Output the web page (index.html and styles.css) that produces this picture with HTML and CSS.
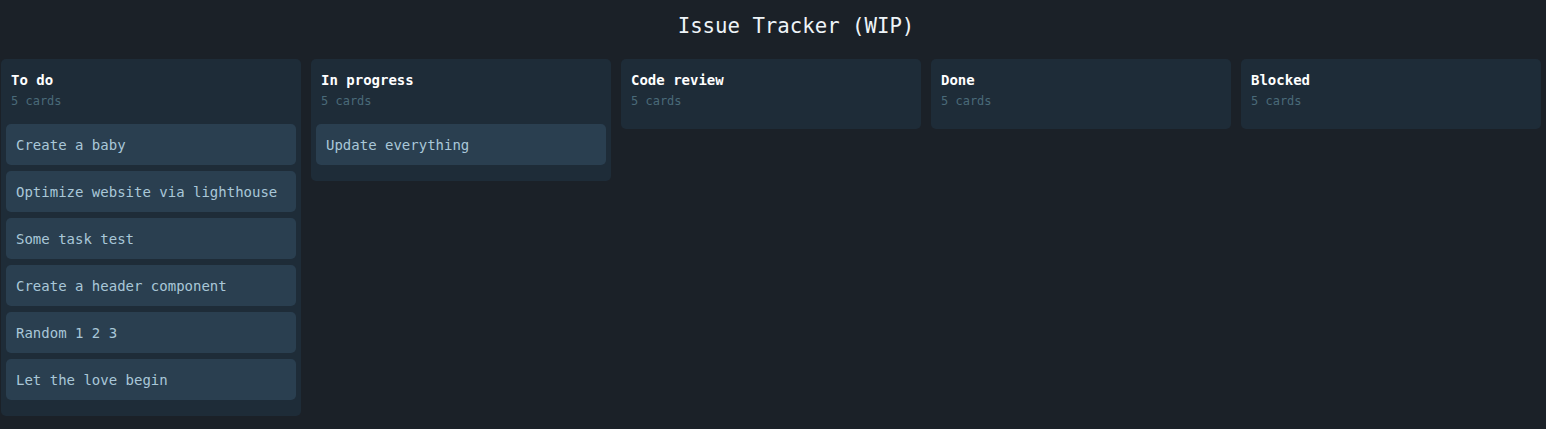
FILE: index.html
```html
<!DOCTYPE html>
<html lang="en">
<head>
<meta charset="utf-8">
<title>Issue Tracker (WIP)</title>
<link rel="stylesheet" href="styles.css">
</head>
<body>
<header class="page-header">
  <h1 class="page-title">Issue Tracker (WIP)</h1>
</header>
<main class="board">
  <section class="column">
    <div class="column-head">
      <h2 class="column-title">To do</h2>
      <div class="column-count">5 cards</div>
    </div>
    <div class="cards">
      <div class="card">Create a baby</div>
      <div class="card">Optimize website via lighthouse</div>
      <div class="card">Some task test</div>
      <div class="card">Create a header component</div>
      <div class="card">Random 1 2 3</div>
      <div class="card">Let the love begin</div>
    </div>
  </section>
  <section class="column">
    <div class="column-head">
      <h2 class="column-title">In progress</h2>
      <div class="column-count">5 cards</div>
    </div>
    <div class="cards">
      <div class="card">Update everything</div>
    </div>
  </section>
  <section class="column">
    <div class="column-head">
      <h2 class="column-title">Code review</h2>
      <div class="column-count">5 cards</div>
    </div>
    <div class="cards"></div>
  </section>
  <section class="column">
    <div class="column-head">
      <h2 class="column-title">Done</h2>
      <div class="column-count">5 cards</div>
    </div>
    <div class="cards"></div>
  </section>
  <section class="column">
    <div class="column-head">
      <h2 class="column-title">Blocked</h2>
      <div class="column-count">5 cards</div>
    </div>
    <div class="cards"></div>
  </section>
</main>
</body>
</html>
```
FILE: styles.css
```css
* { box-sizing: border-box; }

html, body {
  margin: 0;
  padding: 0;
  background: #1b2128;
  font-family: "DejaVu Sans Mono", "Liberation Mono", monospace;
}

.page-header {
  height: 59px;
  display: flex;
  align-items: center;
  justify-content: center;
  padding-left: 46px;
}

.page-title {
  margin: 0;
  font-size: 20.7px;
  font-weight: normal;
  color: #eef4f8;
  line-height: 28px;
  padding-bottom: 8px;
}

.board {
  display: flex;
  align-items: flex-start;
  gap: 10px;
  padding: 0 1px;
}

.column {
  width: 300px;
  flex: 0 0 300px;
  background: #1e2c38;
  border-radius: 5px;
  padding: 11px 5px 0;
}

.column-head {
  padding: 0 5px;
}

.column-title {
  margin: 0;
  font-size: 14px;
  font-weight: bold;
  line-height: 20px;
  color: #ffffff;
}

.column-count {
  font-size: 12px;
  line-height: 22px;
  color: #4a6a78;
}

.cards {
  display: flex;
  flex-direction: column;
  gap: 6px;
  padding: 12px 0 16px;
}

.cards:empty {
  padding: 0 0 17px;
}

.card {
  height: 41px;
  line-height: 42px;
  padding: 0 10px;
  background: #2a3f50;
  border-radius: 5px;
  font-size: 14px;
  color: #a9c7d8;
  white-space: nowrap;
}
```
